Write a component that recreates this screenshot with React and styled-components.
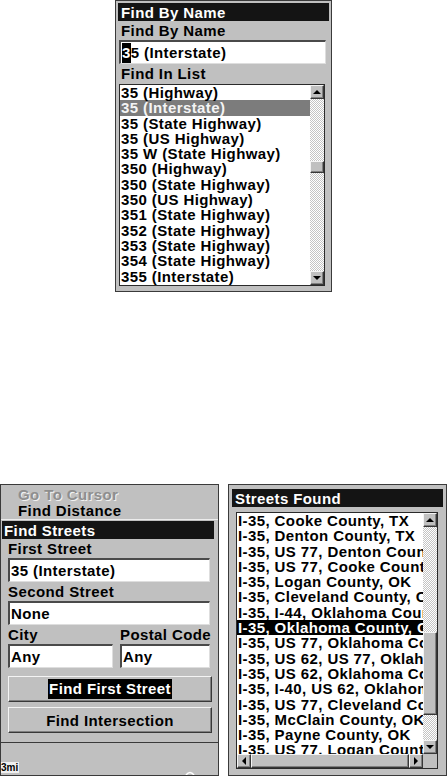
import React from "react";
import styled, { createGlobalStyle, css } from "styled-components";

const FONT = `"Liberation Sans", Arial, Helvetica, sans-serif`;
const GRAY = "#c0c0c0";

const dither = css`
  background: repeating-conic-gradient(#c4c4c4 0 25%, #ffffff 0 50%) 0 0 / 2px 2px;
`;

const raised = css`
  box-sizing: border-box;
  background: ${GRAY};
  border: 1px solid;
  border-color: #f4f4f4 #383838 #383838 #f4f4f4;
  box-shadow: inset -1px -1px #808080;
`;

const GlobalStyle = createGlobalStyle`
  html, body {
    margin: 0;
    padding: 0;
    background: #fff;
  }
`;

const Page = styled.div`
  width: 447px;
  height: 776px;
  display: flex;
  flex-direction: column;
  justify-content: space-between;
  font-family: ${FONT};
  font-weight: 700;
  font-size: 15px;
  letter-spacing: 0.4px;
  color: #000;
`;

const TopRow = styled.div`
  display: flex;
  padding-left: 115px;
`;

const BottomRow = styled.div`
  display: flex;
  justify-content: space-between;
`;

const Panel = styled.div`
  box-sizing: border-box;
  width: ${(p) => p.$w}px;
  height: 292px;
  background: ${GRAY};
  border: 1px solid #3a3a3a;
  padding: ${(p) => p.$pad || "0"};
  display: flex;
  flex-direction: column;
  overflow: hidden;
`;

const TitleBar = styled.div`
  height: 18px;
  line-height: 19px;
  margin: ${(p) => p.$m || "0"};
  padding-left: ${(p) => p.$indent || 3}px;
  background: #141414;
  color: #fff;
  white-space: nowrap;
`;

const FieldLabel = styled.div`
  height: ${(p) => p.$h || 19}px;
  line-height: ${(p) => p.$h || 19}px;
  padding-left: ${(p) => p.$indent || 3}px;
  white-space: nowrap;
`;

const TextBox = styled.div`
  box-sizing: border-box;
  height: 24px;
  margin: ${(p) => p.$m || "0"};
  background: #fff;
  border-top: 2px solid #4a4a4a;
  border-left: 2px solid #4a4a4a;
  border-right: 1px solid #dedede;
  border-bottom: 1px solid #dedede;
  line-height: 21px;
  padding-left: 1px;
  white-space: nowrap;
  overflow: hidden;
`;

const Caret = styled.span`
  background: #000;
  color: #fff;
  padding: 1px 0 2px;
`;

const ListBox = styled.div`
  box-sizing: border-box;
  height: ${(p) => p.$h}px;
  margin: ${(p) => p.$m || "0"};
  background: #fff;
  border: 1px solid #2a2a2a;
  display: grid;
  grid-template-columns: 1fr 14px;
  grid-template-rows: ${(p) => (p.$hscroll ? "1fr 14px" : "1fr")};
`;

const Rows = styled.div`
  overflow: hidden;
  min-width: 0;
`;

const Row = styled.div`
  height: 15.3px;
  line-height: 15.3px;
  padding-left: 1px;
  white-space: nowrap;
  ${(p) =>
    p.$sel === "gray" &&
    css`
      background: #7c7c7c;
      color: #f4f4f4;
    `}
  ${(p) =>
    p.$sel === "black" &&
    css`
      background: #000;
      color: #fff;
    `}
`;

const VScroll = styled.div`
  display: flex;
  flex-direction: column;
`;

const HScroll = styled.div`
  display: flex;
`;

const ArrowButton = styled.div`
  ${raised};
  width: 14px;
  height: 14px;
  flex: none;
  display: flex;
  align-items: center;
  justify-content: center;
`;

const Track = styled.div`
  ${dither};
  flex: ${(p) => (p.$size ? "none" : "1")};
  height: ${(p) => (p.$size ? `${p.$size}px` : "auto")};
`;

const Thumb = styled.div`
  ${raised};
  flex: ${(p) => (p.$size ? "none" : "1")};
  height: ${(p) => (p.$size ? `${p.$size}px` : "auto")};
`;

const Corner = styled.div`
  background: ${GRAY};
`;

const Menu = styled.div`
  box-sizing: border-box;
  height: 34px;
  padding-top: 2px;
  overflow: hidden;
`;

const MenuItem = styled.div`
  height: 16px;
  line-height: 16px;
  padding-left: 17px;
  white-space: nowrap;
  ${(p) =>
    p.$disabled &&
    css`
      color: #8e8e8e;
      text-shadow: 1px 1px 0 #f2f2f2;
    `}
`;

const Dialog = styled.div`
  box-sizing: border-box;
  border-top: 1px solid #ececec;
  border-bottom: 1px solid #3a3a3a;
  padding: 1px 0 9px;
  display: flex;
  flex-direction: column;
`;

const PairGrid = styled.div`
  display: grid;
  grid-template-columns: 105px 90px;
  column-gap: 7px;
  padding-left: 7px;
`;

const PairLabel = styled.div`
  height: 19px;
  line-height: 19px;
  white-space: nowrap;
`;

const CommandButton = styled.div`
  ${raised};
  height: 26px;
  margin: ${(p) => p.$m || "0"};
  display: flex;
  align-items: center;
  justify-content: center;
  white-space: nowrap;
`;

const Focus = styled.span`
  background: #000;
  color: #fff;
  padding: 1px 1px 2px;
`;

const MapArea = styled.div`
  flex: 1;
  position: relative;
`;

const ScaleLabel = styled.div`
  position: absolute;
  left: -1px;
  bottom: 2px;
  font-size: 10px;
  line-height: 11px;
  letter-spacing: 0;
  padding: 0 1px;
  background: #f0f0f0;
`;

const MapMark = styled.svg`
  position: absolute;
  left: 184px;
  bottom: 0;
`;

const Arrow = ({ dir }) => {
  const pts = {
    up: "0,5 4,1 8,5",
    down: "0,1 4,5 8,1",
    left: "5,0 1,4 5,8",
    right: "1,0 5,4 1,8",
  }[dir];
  const w = dir === "up" || dir === "down" ? 8 : 6;
  const h = dir === "up" || dir === "down" ? 6 : 8;
  return (
    <svg width={w} height={h} viewBox={`0 0 ${w} ${h}`}>
      <polygon points={pts} fill="#000" />
    </svg>
  );
};

const nameList = [
  "35 (Highway)",
  "35 (Interstate)",
  "35 (State Highway)",
  "35 (US Highway)",
  "35 W (State Highway)",
  "350 (Highway)",
  "350 (State Highway)",
  "350 (US Highway)",
  "351 (State Highway)",
  "352 (State Highway)",
  "353 (State Highway)",
  "354 (State Highway)",
  "355 (Interstate)",
];

const streetList = [
  "I-35, Cooke County, TX",
  "I-35, Denton County, TX",
  "I-35, US 77, Denton County, TX",
  "I-35, US 77, Cooke County, TX",
  "I-35, Logan County, OK",
  "I-35, Cleveland County, OK",
  "I-35, I-44, Oklahoma County, OK",
  "I-35, Oklahoma County, OK",
  "I-35, US 77, Oklahoma County, OK",
  "I-35, US 62, US 77, Oklahoma County, OK",
  "I-35, US 62, Oklahoma County, OK",
  "I-35, I-40, US 62, Oklahoma County, OK",
  "I-35, US 77, Cleveland County, OK",
  "I-35, McClain County, OK",
  "I-35, Payne County, OK",
  "I-35, US 77, Logan County, OK",
];

const FindByName = () => (
  <Panel $w={217} $pad="2px 2px 0 2px">
    <TitleBar>Find By Name</TitleBar>
    <FieldLabel>Find By Name</FieldLabel>
    <TextBox $m="0 3px 0 1px">
      <Caret>3</Caret>5 (Interstate)
    </TextBox>
    <FieldLabel $h={20}>Find In List</FieldLabel>
    <ListBox $h={202} $m="0 4px 0 1px">
      <Rows>
        {nameList.map((n, i) => (
          <Row key={n} $sel={i === 1 ? "gray" : undefined}>
            {n}
          </Row>
        ))}
      </Rows>
      <VScroll>
        <ArrowButton>
          <Arrow dir="up" />
        </ArrowButton>
        <Track $size={62} />
        <Thumb $size={12} />
        <Track />
        <ArrowButton>
          <Arrow dir="down" />
        </ArrowButton>
      </VScroll>
    </ListBox>
  </Panel>
);

const FindStreets = () => (
  <Panel $w={219}>
    <Menu>
      <MenuItem $disabled>Go To Cursor</MenuItem>
      <MenuItem>Find Distance</MenuItem>
    </Menu>
    <Dialog>
      <TitleBar $m="0 4px 0 1px" $indent={2}>
        Find Streets
      </TitleBar>
      <FieldLabel $indent={7}>First Street</FieldLabel>
      <TextBox $m="0 8px 0 7px">35 (Interstate)</TextBox>
      <FieldLabel $indent={7}>Second Street</FieldLabel>
      <TextBox $m="0 8px 0 7px">None</TextBox>
      <PairGrid>
        <PairLabel>City</PairLabel>
        <PairLabel>Postal Code</PairLabel>
        <TextBox>Any</TextBox>
        <TextBox>Any</TextBox>
      </PairGrid>
      <CommandButton $m="8px 6px 0 7px">
        <Focus>Find First Street</Focus>
      </CommandButton>
      <CommandButton $m="5px 6px 0 7px">Find Intersection</CommandButton>
    </Dialog>
    <MapArea>
      <ScaleLabel>3mi</ScaleLabel>
      <MapMark width="10" height="5" viewBox="0 0 10 5">
        <path d="M1 5 Q5 0 9 5" fill="none" stroke="#fff" strokeWidth="1.5" />
      </MapMark>
    </MapArea>
  </Panel>
);

const StreetsFound = () => (
  <Panel $w={219} $pad="4px 3px 0">
    <TitleBar>Streets Found</TitleBar>
    <ListBox $h={257} $m="5px 5px 0 4px" $hscroll>
      <Rows>
        {streetList.map((n, i) => (
          <Row key={n} $sel={i === 7 ? "black" : undefined}>
            {n}
          </Row>
        ))}
      </Rows>
      <VScroll>
        <ArrowButton>
          <Arrow dir="up" />
        </ArrowButton>
        <Track $size={105} />
        <Thumb $size={83} />
        <Track />
        <ArrowButton>
          <Arrow dir="down" />
        </ArrowButton>
      </VScroll>
      <HScroll>
        <ArrowButton>
          <Arrow dir="left" />
        </ArrowButton>
        <Thumb />
        <ArrowButton>
          <Arrow dir="right" />
        </ArrowButton>
      </HScroll>
      <Corner />
    </ListBox>
  </Panel>
);

export default function App() {
  return (
    <>
      <GlobalStyle />
      <Page>
        <TopRow>
          <FindByName />
        </TopRow>
        <BottomRow>
          <FindStreets />
          <StreetsFound />
        </BottomRow>
      </Page>
    </>
  );
}
